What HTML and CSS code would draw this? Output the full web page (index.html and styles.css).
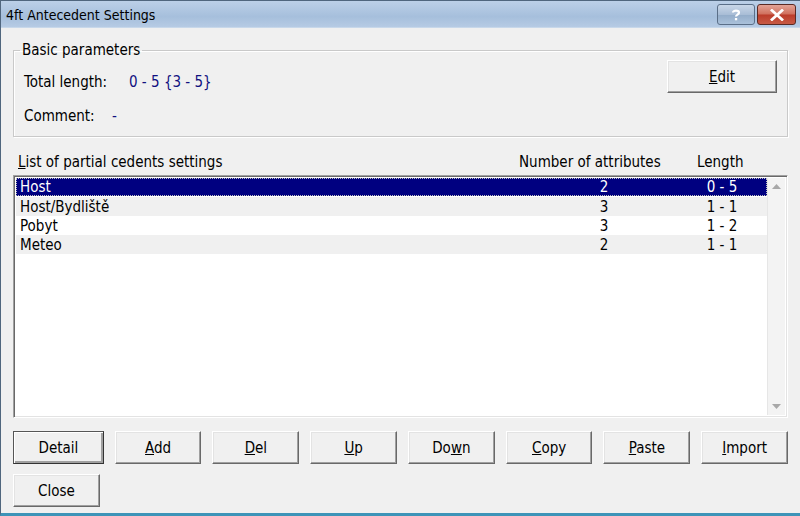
FILE: index.html
```html
<!DOCTYPE html>
<html>
<head>
<meta charset="utf-8">
<link rel="stylesheet" href="styles.css">
</head>
<body>
<div class="window">
  <div class="titlebar">
    <span class="title">4ft Antecedent Settings</span>
    <div class="caption-btns">
      <div class="cbtn help"><svg width="14" height="14" viewBox="0 0 14 14"><path d="M4 4.5 C4 2 10 2 10 4.8 C10 6.6 7 6.6 7 8.6" fill="none" stroke="#fff" stroke-width="2.2"/><rect x="5.9" y="10" width="2.3" height="2.3" fill="#fff"/></svg></div>
      <div class="cbtn close"><svg width="16" height="12" viewBox="0 0 16 12"><path d="M3 1.5 L13 10.5 M13 1.5 L3 10.5" stroke="#fff" stroke-width="2.8" stroke-linecap="square"/></svg></div>
    </div>
  </div>
  <div class="client">
    <fieldset class="group">
      <legend>Basic parameters</legend>
      <div class="group-body">
        <div class="params">
          <div class="prow"><span class="plabel">Total length:</span><span class="pval">0 - 5 {3 - 5}</span></div>
          <div class="prow"><span class="plabel">Comment:</span><span class="pval short">-</span></div>
        </div>
        <button class="btn edit"><u>E</u>dit</button>
      </div>
    </fieldset>
    <div class="list-head">
      <span class="h-name"><u>L</u>ist of partial cedents settings</span>
      <span class="h-num">Number of attributes</span>
      <span class="h-len">Length</span>
    </div>
    <div class="listbox">
      <div class="rows">
        <div class="row sel"><span class="c-name">Host</span><span class="c-num">2</span><span class="c-len">0 - 5</span></div>
        <div class="row alt"><span class="c-name">Host/Bydliště</span><span class="c-num">3</span><span class="c-len">1 - 1</span></div>
        <div class="row"><span class="c-name">Pobyt</span><span class="c-num">3</span><span class="c-len">1 - 2</span></div>
        <div class="row alt"><span class="c-name">Meteo</span><span class="c-num">2</span><span class="c-len">1 - 1</span></div>
      </div>
      <div class="scrollbar">
        <svg width="9" height="5" viewBox="0 0 9 5"><path d="M0 5 L4.5 0 L9 5 Z" fill="#a8a8a8"/></svg>
        <svg width="9" height="5" viewBox="0 0 9 5"><path d="M0 0 L4.5 5 L9 0 Z" fill="#a8a8a8"/></svg>
      </div>
    </div>
    <div class="btn-row">
      <button class="btn default">Detail</button>
      <button class="btn"><u>A</u>dd</button>
      <button class="btn"><u>D</u>el</button>
      <button class="btn"><u>U</u>p</button>
      <button class="btn">Do<u>w</u>n</button>
      <button class="btn"><u>C</u>opy</button>
      <button class="btn"><u>P</u>aste</button>
      <button class="btn"><u>I</u>mport</button>
    </div>
    <div class="btn-row second">
      <button class="btn">Close</button>
    </div>
  </div>
</div>
</body>
</html>
```
FILE: styles.css
```css
* { box-sizing: border-box; }
html, body { margin: 0; padding: 0; }
body {
  width: 800px; height: 516px; overflow: hidden;
  font-family: "DejaVu Sans Condensed", "DejaVu Sans", sans-serif;
  font-stretch: condensed;
  font-size: 15px;
  color: #000;
  background: #6f8fb0;
}
.window {
  width: 800px; height: 516px;
  border-left: 1px solid #50667e;
  border-top: 1px solid #50667e;
  border-bottom: 3px solid #3d94b8;
  background: #f0f0f0;
  display: flex; flex-direction: column;
}
.titlebar {
  height: 27px; flex: none;
  background: linear-gradient(#bcd0e8, #a6bfdc 60%, #b6cbe4);
  border-bottom: 1px solid #c8d8ea;
  display: flex; align-items: center; justify-content: space-between;
  padding-left: 5px;
}
.title { font-size: 14px; color: #000; margin-top: 1px; }
.caption-btns { display: flex; gap: 2px; align-self: flex-start; margin-top: 3px; margin-right: 4px; }
.cbtn {
  height: 21px; border: 1px solid #5b6f88; border-radius: 3px;
  display: flex; align-items: center; justify-content: center;
}
.cbtn.help { width: 38px; background: linear-gradient(#c9d7e8, #a9bdd6 50%, #93acc9 51%, #aac1da); }
.cbtn.close { width: 39px; border-color: #5a2a24; background: linear-gradient(#e3a396, #d0705d 48%, #bb3c2a 52%, #c75a45); }
.client { flex: 1; padding: 13px 12px 0 12px; display: flex; flex-direction: column; }
.group {
  margin: 0; padding: 0 10px 0 10px;
  border: 1px solid #c9c9c9;
  box-shadow: inset 1px 1px 0 #fff, 1px 1px 0 #fff;
  height: 96px;
}
.group legend { padding: 0 2px; margin-left: -4px; }
.group-body { display: flex; justify-content: space-between; align-items: flex-start; }
.params { padding-top: 14px; }
.prow { height: 34px; display: flex; align-items: flex-start; }
.plabel { width: 105px; }
.pval { color: #101080; }
.pval.short { margin-left: -17px; }
.btn {
  font-family: "DejaVu Sans Condensed", "DejaVu Sans", sans-serif; font-stretch: condensed;
  font-size: 15px; color: #000;
  width: 87px; height: 33px;
  background: #f0f0f0;
  border: 1px solid;
  border-color: #fff #696969 #696969 #fff;
  box-shadow: inset -1px -1px 0 #a0a0a0, inset 1px 1px 0 #e3e3e3;
  padding: 0; margin: 0;
}
.btn u { text-decoration: underline; }
.btn.edit { width: 110px; margin-top: 1px; }
.btn.default { border-color: #555 #333 #333 #555; box-shadow: inset 1px 1px 0 #fff, inset -2px -2px 0 #a0a0a0; width: 91px; }
.list-head { display: flex; height: 38px; align-items: center; padding-top: 12px; }
.h-name { padding-left: 5px; flex: 1; }
.h-num { width: 178px; }
.h-len { width: 91px; }
.listbox {
  height: 243px; flex: none;
  background: #fff;
  border: 1px solid;
  border-color: #a0a0a0 #fff #fff #a0a0a0;
  box-shadow: inset 1px 1px 0 #696969, inset -1px -1px 0 #e3e3e3;
  padding: 2px 2px 2px 2px;
  display: flex;
}
.rows { flex: 1; }
.row { height: 19px; display: flex; align-items: center; padding-left: 4px; }
.row.alt { background: #f0f0f0; }
.row.sel { background: #000080; color: #fff; outline: 1px dotted #c0c0c0; outline-offset: -1px; height: 18px; margin-bottom: 1px; }
.c-name { flex: 1; }
.c-num { width: 20px; text-align: center; margin-right: 88px; }
.c-len { width: 40px; text-align: center; margin-right: 25px; }
.scrollbar {
  width: 18px; background: #f3f3f3; border-left: 1px solid #e6e6e6;
  display: flex; flex-direction: column; justify-content: space-between; align-items: center;
  padding: 6px 0 6px 0;
}
.btn-row { display: flex; gap: 11px; margin-top: 13px; }
.btn-row.second { margin-top: 10px; }
```
